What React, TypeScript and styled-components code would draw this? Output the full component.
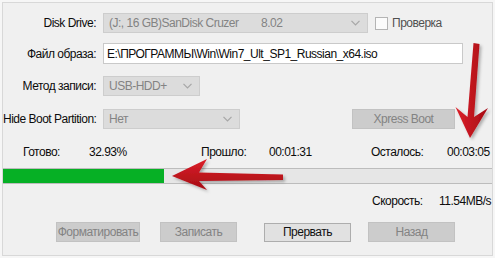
import React from "react";
import styled, { createGlobalStyle } from "styled-components";

const GlobalStyle = createGlobalStyle`
  html, body {
    margin: 0;
    padding: 0;
    background: #f6f6f6;
  }
  body {
    font-family: "Liberation Sans", Arial, sans-serif;
    font-size: 12px;
    letter-spacing: -0.5px;
    color: #0c0c0c;
  }
`;

const Frame = styled.div`
  position: relative;
  box-sizing: border-box;
  width: 491px;
  height: 254px;
  margin: 2px 0 0 2px;
  border: 1px solid #d8d8d8;
  background: #f0f0f0;
  display: flex;
  flex-direction: column;
  overflow: hidden;
`;

const FormRow = styled.div<{ $top: number; $h: number }>`
  display: flex;
  align-items: center;
  height: ${(p) => p.$h}px;
  margin-top: ${(p) => p.$top}px;
`;

const Label = styled.div`
  box-sizing: border-box;
  width: 100px;
  padding-right: 7px;
  text-align: right;
  white-space: nowrap;
`;

const Combo = styled.div<{ $w: number }>`
  box-sizing: border-box;
  width: ${(p) => p.$w}px;
  height: 20px;
  border: 1px solid #cdcdcd;
  background: #dcdcdc;
  color: #838383;
  display: flex;
  align-items: center;
  padding: 0 7px 0 5px;
  white-space: nowrap;
`;

const ComboText = styled.span<{ $w?: number }>`
  flex: ${(p) => (p.$w ? `0 0 ${p.$w}px` : "1")};
`;

const Chevron = () => (
  <svg width="9" height="6" viewBox="0 0 9 6">
    <polyline points="0.5,0.8 4.5,4.8 8.5,0.8" fill="none" stroke="#a6a6a6" strokeWidth="1.2" />
  </svg>
);

const CheckBox = styled.div`
  box-sizing: border-box;
  width: 13px;
  height: 13px;
  margin-left: 7px;
  border: 1px solid #b4b4b4;
  background: #fbfbfb;
`;

const CheckLabel = styled.span`
  margin-left: 4px;
  color: #505050;
`;

const TextInput = styled.div`
  box-sizing: border-box;
  width: 360px;
  height: 21px;
  border: 1px solid #c9c9c9;
  background: #fff;
  display: flex;
  align-items: center;
  padding-left: 3px;
  white-space: nowrap;
`;

const Button = styled.div<{ $w: number; $gap?: number; $active?: boolean }>`
  box-sizing: border-box;
  width: ${(p) => p.$w}px;
  height: ${(p) => (p.$active ? 19 : 20)}px;
  margin-left: ${(p) => p.$gap ?? 0}px;
  border: 1px solid ${(p) => (p.$active ? "#adadad" : "#c2c2c2")};
  background: ${(p) => (p.$active ? "#e1e1e1" : "#cccccc")};
  color: ${(p) => (p.$active ? "#111" : "#838383")};
  display: flex;
  align-items: center;
  justify-content: center;
  white-space: nowrap;
`;

const Stats = styled.div`
  display: grid;
  grid-template-columns: 66px 112px 68px 102px 76px auto;
  padding-left: 20px;
  margin-top: 16px;
  line-height: 14px;
  white-space: nowrap;
`;

const Progress = styled.div`
  box-sizing: border-box;
  height: 16px;
  margin-top: 9px;
  border-top: 1px solid #bcbcbc;
  border-bottom: 1px solid #bcbcbc;
  background: #e6e6e6;
`;

const ProgressFill = styled.div`
  height: 100%;
  background: #06b025;
`;

const SpeedRow = styled.div`
  display: flex;
  justify-content: flex-end;
  margin-top: 10px;
  line-height: 14px;
  white-space: nowrap;
`;

const SpeedLabel = styled.span`
  width: 67px;
`;

const SpeedValue = styled.span`
  width: 53px;
  overflow: hidden;
`;

const ButtonRow = styled.div`
  display: flex;
  align-items: center;
  margin-top: 14px;
  padding-left: 53px;
`;

const Overlay = styled.svg`
  position: absolute;
  left: -3px;
  top: -3px;
  pointer-events: none;
`;

const Arrows = () => (
  <Overlay width="495" height="258" viewBox="0 0 495 258">
    <defs>
      <linearGradient id="redV" x1="0" y1="0" x2="1" y2="0">
        <stop offset="0" stopColor="#dc1f29" />
        <stop offset="1" stopColor="#a50c14" />
      </linearGradient>
      <linearGradient id="redH" x1="0" y1="0" x2="0" y2="1">
        <stop offset="0" stopColor="#dc1f29" />
        <stop offset="1" stopColor="#a50c14" />
      </linearGradient>
      <filter id="shadow" x="-30%" y="-30%" width="160%" height="160%">
        <feDropShadow dx="2" dy="2" stdDeviation="1.5" floodColor="#000" floodOpacity="0.28" />
      </filter>
    </defs>
    <path
      d="M473.5,43 L479.5,44 L474,117 L488,108 L470,138 L455.5,107 L467.5,117 Z"
      fill="url(#redV)"
      filter="url(#shadow)"
    />
    <path
      d="M172,176 L207,159 L199,172.5 L283,174.5 L283,180 L199,181 L207,190 Z"
      fill="url(#redH)"
      filter="url(#shadow)"
    />
  </Overlay>
);

export default function App() {
  const progress = 32.93;
  return (
    <>
      <GlobalStyle />
      <Frame>
        <FormRow $top={10} $h={20}>
          <Label>Disk Drive:</Label>
          <Combo $w={265}>
            <ComboText $w={152}>(J:, 16 GB)SanDisk Cruzer</ComboText>
            <ComboText>8.02</ComboText>
            <Chevron />
          </Combo>
          <CheckBox />
          <CheckLabel>Проверка</CheckLabel>
        </FormRow>
        <FormRow $top={10} $h={21}>
          <Label>Файл образа:</Label>
          <TextInput>E:\ПРОГРАММЫ\Win\Win7_Ult_SP1_Russian_x64.iso</TextInput>
        </FormRow>
        <FormRow $top={12} $h={20}>
          <Label>Метод записи:</Label>
          <Combo $w={97}>
            <ComboText>USB-HDD+</ComboText>
            <Chevron />
          </Combo>
        </FormRow>
        <FormRow $top={12} $h={21}>
          <Label>Hide Boot Partition:</Label>
          <Combo $w={137}>
            <ComboText>Нет</ComboText>
            <Chevron />
          </Combo>
          <Button $w={103} $gap={112}>Xpress Boot</Button>
        </FormRow>
        <Stats>
          <span>Готово:</span>
          <span>{progress.toFixed(2)}%</span>
          <span>Прошло:</span>
          <span>00:01:31</span>
          <span>Осталось:</span>
          <span>00:03:05</span>
        </Stats>
        <Progress>
          <ProgressFill style={{ width: `${progress}%` }} />
        </Progress>
        <SpeedRow>
          <SpeedLabel>Скорость:</SpeedLabel>
          <SpeedValue>11.54MB/s</SpeedValue>
        </SpeedRow>
        <ButtonRow>
          <Button $w={84}>Форматировать</Button>
          <Button $w={77} $gap={20}>Записать</Button>
          <Button $w={87} $gap={27} $active>Прервать</Button>
          <Button $w={87} $gap={17}>Назад</Button>
        </ButtonRow>
        <Arrows />
      </Frame>
    </>
  );
}
